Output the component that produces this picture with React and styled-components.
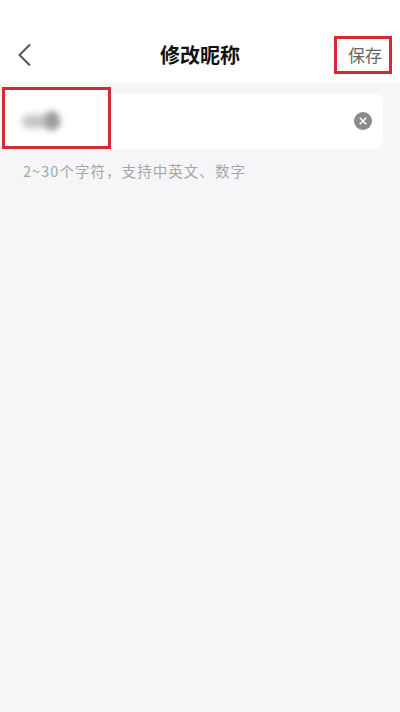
import styled, { createGlobalStyle } from "styled-components";

const Global = createGlobalStyle`
	html, body {
		margin: 0;
		padding: 0;
		background: #F6F6F9;
		font-family: "Noto Sans CJK SC", "Noto Sans", sans-serif;
	}
	* { box-sizing: border-box; }
`;

export default function App() {
	return (
		<Page>
			<Global />
			<Header>
				<BackButton aria-label="back">
					<svg width="16" height="24" viewBox="0 0 16 24" fill="none">
						<path d="M13 1.5 2.5 12 13 22.5" stroke="#555" strokeWidth="2" />
					</svg>
				</BackButton>
				<Title>修改昵称</Title>
				<SaveButton>
					<Marked>保存</Marked>
				</SaveButton>
			</Header>
			<Content>
				<Field>
					<NameMark>
						<BlurredName />
						<BlurredSpot />
					</NameMark>
					<ClearIcon viewBox="0 0 18 18">
						<circle cx="9" cy="9" r="9" fill="#8A8A8A" />
						<path d="m5.8 5.8 6.4 6.4m0-6.4-6.4 6.4" stroke="#fff" strokeWidth="1.6" />
					</ClearIcon>
				</Field>
				<Hint>2~30个字符，支持中英文、数字</Hint>
			</Content>
		</Page>
	);
}

const Page = styled.div`
	width: 400px;
	height: 712px;
	overflow: hidden;
	display: flex;
	flex-direction: column;
	background: #F6F6F9;
`;

const Header = styled.header`
	height: 83px;
	flex: none;
	padding: 28px 8px 0;
	display: grid;
	grid-template-columns: 1fr auto 1fr;
	align-items: start;
	background: #fff;
`;

const BackButton = styled.button`
	width: 16px;
	height: 54px;
	padding: 16px 0 0;
	margin: -8px 0 0 9px;
	border: 0;
	background: none;
	display: block;
	line-height: 0;
`;

const Title = styled.h1`
	margin: 0;
	padding-top: 12px;
	font-size: 20px;
	line-height: 30px;
	font-weight: 700;
	color: #111;
`;

const SaveButton = styled.button`
	justify-self: end;
	padding: 0;
	border: 0;
	background: none;
	font-family: inherit;
	margin-top: 8px;
`;

const Marked = styled.span`
	display: block;
	width: 58px;
	height: 38px;
	padding-left: 11px;
	border: 3px solid #D42A38;
	font-size: 17px;
	line-height: 32px;
	color: #666;
	text-align: left;
`;

const Content = styled.main`
	padding: 11px 17px 0 0;
`;

const Field = styled.div`
	height: 55px;
	display: flex;
	align-items: center;
	justify-content: space-between;
	padding-right: 11px;
	margin-left: 2px;
	background: #fff;
	border-radius: 8px;
`;

const NameMark = styled.div`
	position: relative;
	width: 109px;
	height: 62px;
	margin-top: -7px;
	border: 3px solid #D42A38;
	background: #fff;
`;

const BlurredName = styled.div`
	position: absolute;
	left: 17px;
	top: 25px;
	width: 38px;
	height: 13px;
	border-radius: 6px;
	background: #C4C4C4;
	filter: blur(3.5px);
`;

const BlurredSpot = styled.div`
	position: absolute;
	left: 40px;
	top: 21px;
	width: 14px;
	height: 19px;
	border-radius: 50%;
	background: #9C9C9C;
	filter: blur(3px);
`;

const ClearIcon = styled.svg`
	width: 18px;
	height: 18px;
	margin-bottom: 2px;
`;

const Hint = styled.p`
	margin: 11px 0 0 23px;
	font-size: 14.5px;
	line-height: 22px;
	letter-spacing: 1.05px;
	color: #A6A6A6;
`;
